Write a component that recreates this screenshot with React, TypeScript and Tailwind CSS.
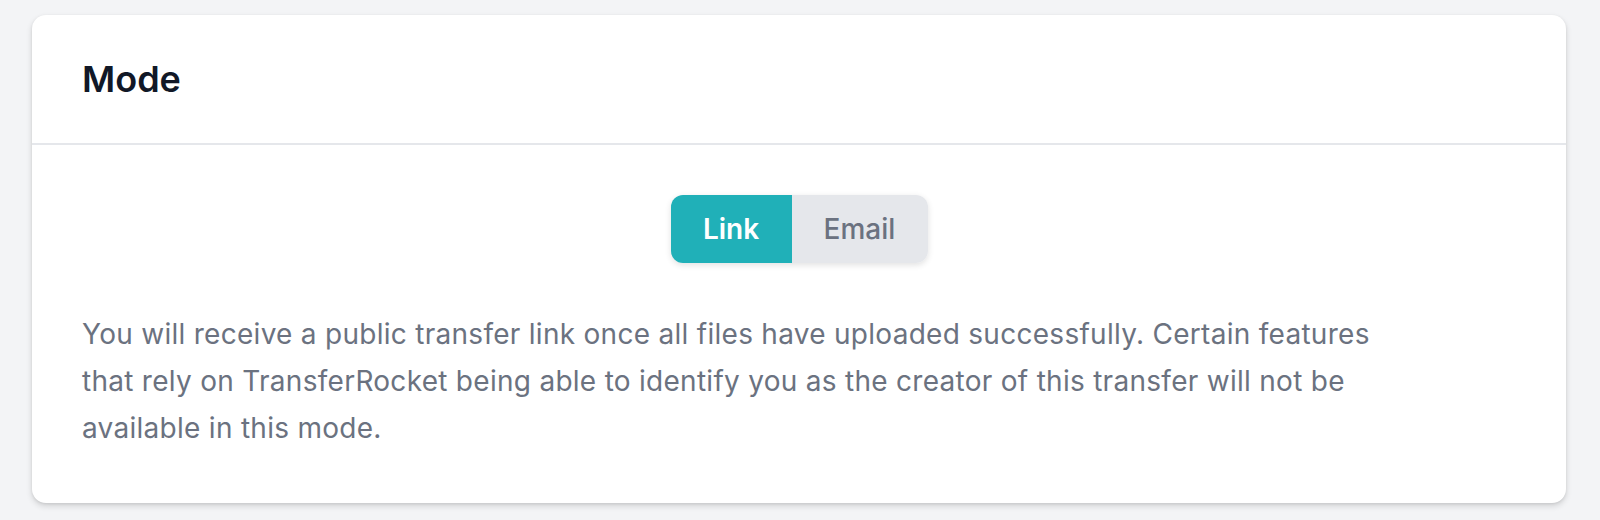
export default function App() {
  return (
    <div
      className="min-h-screen bg-[#f3f4f6] px-8 pt-[15px]"
      style={{ fontFamily: "Inter, 'Noto Sans', sans-serif" }}
    >
      <section className="w-[1534px] overflow-hidden rounded-[14px] bg-white shadow-[0_3px_6px_rgba(0,0,0,0.14),0_1px_3px_rgba(0,0,0,0.08)]">
        <header className="border-b-2 border-[#e5e7eb] px-[50px] py-[36px]">
          <h2 className="text-[36px] font-semibold leading-[56px] text-[#111827]">Mode</h2>
        </header>
        <div className="px-[50px] pb-[51px] pt-[50px]">
          <div className="flex justify-center">
            <div className="flex h-[68px] overflow-hidden rounded-[12px] shadow-[0_2px_6px_rgba(0,0,0,0.12)]">
              <button className="w-[121px] bg-[#20b0b8] text-[28px] font-semibold text-white">
                Link
              </button>
              <button className="w-[136px] bg-[#e5e7eb] text-[28px] font-medium text-[#6b7280]">
                Email
              </button>
            </div>
          </div>
          <p className="mt-[48px] max-w-[1310px] text-[28px] leading-[47px] tracking-[0.01em] text-[#6b7280]">
            You will receive a public transfer link once all files have uploaded successfully. Certain
            features that rely on TransferRocket being able to identify you as the creator of this
            transfer will not be available in this mode.
          </p>
        </div>
      </section>
    </div>
  );
}
